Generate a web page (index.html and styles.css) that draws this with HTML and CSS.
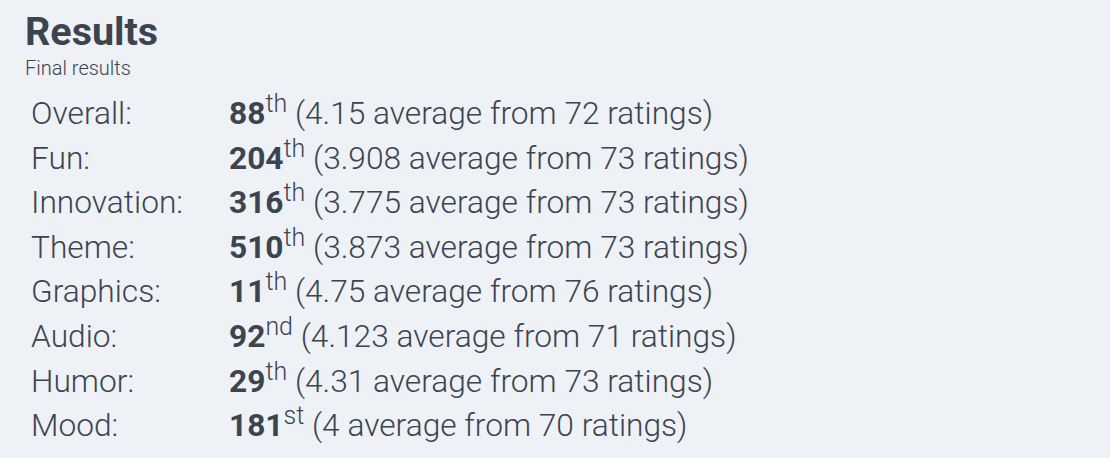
FILE: index.html
```html
<!DOCTYPE html>
<html lang="en">

<head>
    <meta charset="UTF-8">
    <meta name="viewport" content="width=device-width, initial-scale=1.0">
    <title>Results</title>
    <link rel="stylesheet" href="styles.css">
</head>

<body>
    <div class="results">
        <h2 class="title">Results</h2>
        <div class="subtitle">Final results</div>
        <table class="ratings">
            <tr>
                <td class="label">Overall:</td>
                <td><strong>88</strong><sup>th</sup> (4.15 average from 72 ratings)</td>
            </tr>
            <tr>
                <td class="label">Fun:</td>
                <td><strong>204</strong><sup>th</sup> (3.908 average from 73 ratings)</td>
            </tr>
            <tr>
                <td class="label">Innovation:</td>
                <td><strong>316</strong><sup>th</sup> (3.775 average from 73 ratings)</td>
            </tr>
            <tr>
                <td class="label">Theme:</td>
                <td><strong>510</strong><sup>th</sup> (3.873 average from 73 ratings)</td>
            </tr>
            <tr>
                <td class="label">Graphics:</td>
                <td><strong>11</strong><sup>th</sup> (4.75 average from 76 ratings)</td>
            </tr>
            <tr>
                <td class="label">Audio:</td>
                <td><strong>92</strong><sup>nd</sup> (4.123 average from 71 ratings)</td>
            </tr>
            <tr>
                <td class="label">Humor:</td>
                <td><strong>29</strong><sup>th</sup> (4.31 average from 73 ratings)</td>
            </tr>
            <tr>
                <td class="label">Mood:</td>
                <td><strong>181</strong><sup>st</sup> (4 average from 70 ratings)</td>
            </tr>
        </table>
    </div>
</body>

</html>
```

FILE: styles.css
```css
* {
    margin: 0;
    padding: 0;
    box-sizing: border-box;
}

body {
    background-color: #eef1f6;
    color: #3c4450;
    font-family: Roboto, "Liberation Sans", sans-serif;
}

.results {
    padding: 10px 25px;
}

.title {
    font-size: 39.5px;
    font-weight: 700;
    line-height: 44px;
}

.subtitle {
    margin-top: 2px;
    font-size: 20px;
    font-weight: 300;
    line-height: 24px;
}

.ratings {
    border-collapse: collapse;
    margin-top: 12px;
    margin-left: 6px;
    font-size: 31.7px;
    font-weight: 300;
}

.ratings td {
    padding: 0;
    height: 44.6px;
    line-height: 44.6px;
    white-space: nowrap;
}

.ratings .label {
    width: 198px;
}

.ratings strong {
    font-weight: 700;
}

.ratings sup {
    font-size: 25px;
    line-height: 0;
}
```
